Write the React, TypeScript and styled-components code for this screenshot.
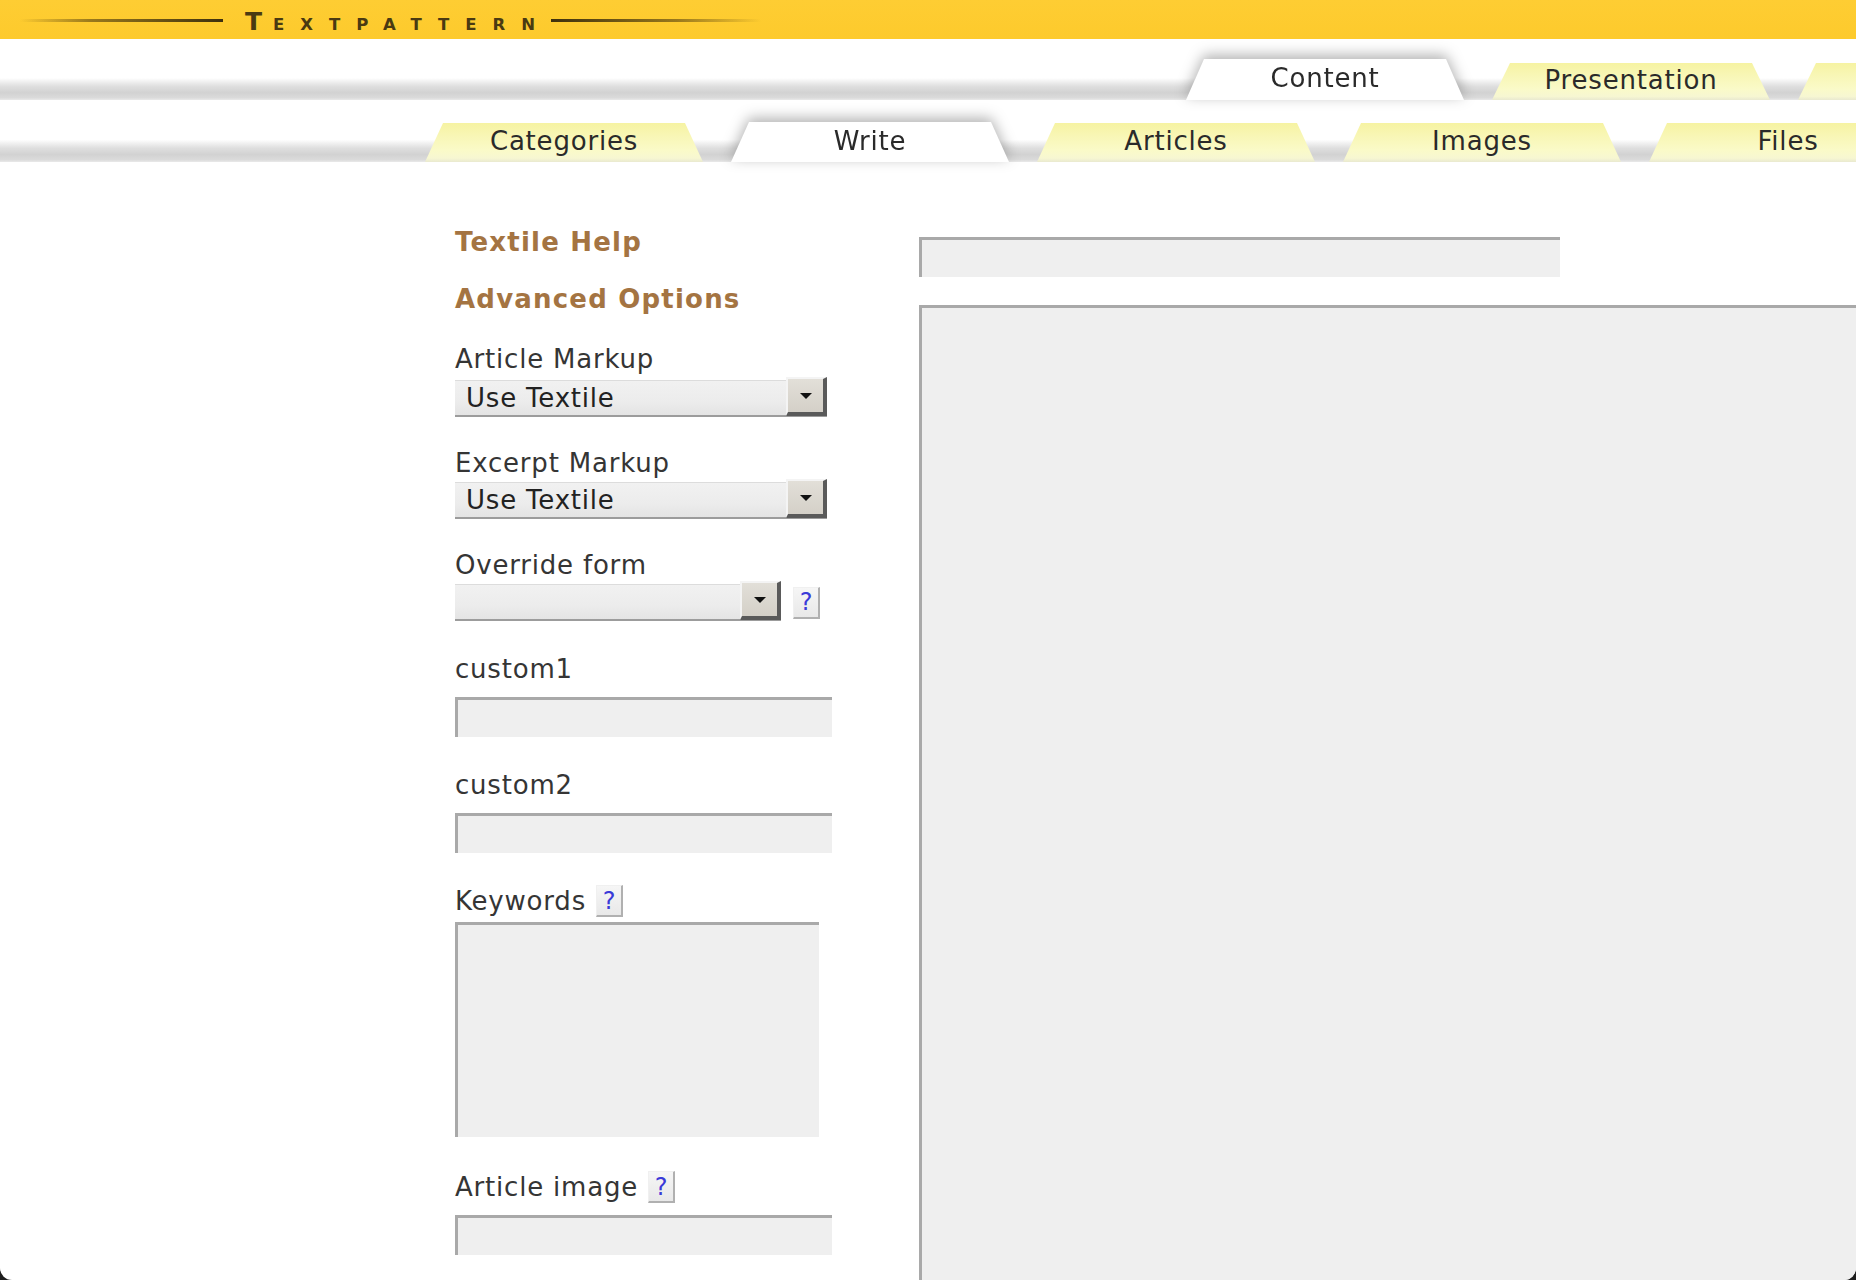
import React from "react";
import styled, { createGlobalStyle, css } from "styled-components";

const Global = createGlobalStyle`
  html, body {
    margin: 0;
    padding: 0;
    background: #1e1e1e;
    overflow: hidden;
  }
  #root {
    width: 1856px;
    height: 1280px;
  }
`;

const Page = styled.div`
  width: 1856px;
  height: 1280px;
  background: #ffffff;
  overflow: hidden;
  border-radius: 0 0 12px 12px;
  font-family: "DejaVu Sans", Verdana, sans-serif;
  color: #333;
`;

/* ---------- top yellow bar ---------- */
const LogoBar = styled.header`
  height: 39px;
  background: linear-gradient(180deg, #fecd33 0%, #fdca2c 100%);
  display: flex;
  align-items: center;
  padding-left: 20px;
  box-sizing: border-box;
`;

const LogoLine = styled.div<{ $dir: "left" | "right" }>`
  width: ${(p) => (p.$dir === "left" ? 203 : 210)}px;
  height: 3px;
  margin-top: 1px;
  background: ${(p) =>
    p.$dir === "left"
      ? "linear-gradient(90deg, rgba(70,50,10,0) 0%, rgba(70,52,12,0.55) 35%, #3e300d 100%)"
      : "linear-gradient(90deg, #3e300d 0%, rgba(70,52,12,0.55) 60%, rgba(70,50,10,0) 100%)"};
`;

const LogoText = styled.div`
  margin-left: 22px;
  display: flex;
  align-items: baseline;
  font-family: "DejaVu Sans", sans-serif;
  font-weight: bold;
  color: #4a3a12;
  text-transform: uppercase;
  line-height: 1;
  padding-top: 3px;
`;

const LogoBig = styled.span`
  font-size: 25px;
  letter-spacing: 11px;
`;

const LogoSmall = styled.span`
  font-size: 16.5px;
  letter-spacing: 16px;
`;

/* ---------- tab rows ---------- */
const TabRow = styled.nav<{ $height: number }>`
  height: ${(p) => p.$height}px;
  display: flex;
  align-items: flex-end;
  background: linear-gradient(
    180deg,
    #ffffff 0%,
    #ffffff 64%,
    #f0f0f0 70%,
    #dedede 78%,
    #d2d2d2 88%,
    #dadada 96%,
    #e9e9e9 100%
  );
`;

const RowFiller = styled.div<{ $width: number }>`
  flex: 0 0 ${(p) => p.$width}px;
`;

const TabSlot = styled.div<{ $active?: boolean }>`
  flex: 0 0 278px;
  margin: 0 14px;
  ${(p) =>
    p.$active &&
    css`
      filter: drop-shadow(0 -4px 7px rgba(0, 0, 0, 0.3));
    `}
`;

const TabShape = styled.div<{ $active?: boolean; $h: number }>`
  height: ${(p) => p.$h}px;
  clip-path: polygon(18px 0, calc(100% - 18px) 0, 100% 100%, 0 100%);
  background: ${(p) =>
    p.$active
      ? "#ffffff"
      : "linear-gradient(180deg, #f6f3a2 0%, #f8f6b4 30%, #fafac8 70%, #f7f7d2 90%, #e9e9d0 100%)"};
  display: flex;
  align-items: center;
  justify-content: center;
  box-sizing: border-box;
  padding-bottom: 3px;
  font-size: 26px;
  letter-spacing: 0.8px;
  color: #2a2a2a;
  white-space: nowrap;
`;

type TabDef = { key: string; label: string; active?: boolean };

const Tabs: React.FC<{ filler: number; height: number; tabs: TabDef[]; tabH: number; activeH: number }> = ({
  filler,
  height,
  tabs,
  tabH,
  activeH,
}) => (
  <TabRow $height={height}>
    <RowFiller $width={filler} />
    {tabs.map((t) => (
      <TabSlot key={t.key} $active={t.active}>
        <TabShape $active={t.active} $h={t.active ? activeH : tabH}>
          {t.label}
        </TabShape>
      </TabSlot>
    ))}
  </TabRow>
);

/* ---------- main area ---------- */
const Main = styled.main`
  display: flex;
  padding: 64px 0 0 455px;
`;

const LeftCol = styled.section`
  flex: 0 0 464px;
  display: flex;
  flex-direction: column;
`;

const RightCol = styled.section`
  flex: 1;
  display: flex;
  flex-direction: column;
  gap: 28px;
  padding-top: 11px;
  min-width: 0;
`;

const ToggleLink = styled.a<{ $after: number }>`
  display: block;
  font-weight: bold;
  font-size: 26px;
  letter-spacing: 1.2px;
  line-height: 32px;
  color: #a47442;
  text-decoration: none;
  margin-bottom: ${(p) => p.$after}px;
`;

const Field = styled.div<{ $after?: number }>`
  display: flex;
  flex-direction: column;
  margin-bottom: ${(p) => p.$after ?? 32}px;
`;

const LabelRow = styled.div<{ $gap: number }>`
  display: flex;
  align-items: center;
  gap: 10px;
  margin-bottom: ${(p) => p.$gap}px;
`;

const Label = styled.label`
  font-size: 26px;
  letter-spacing: 0.8px;
  line-height: 32px;
  color: #353535;
`;

const SelectRow = styled.div`
  display: flex;
  align-items: center;
  gap: 12px;
`;

const SelectBox = styled.div<{ $width: number }>`
  width: ${(p) => p.$width}px;
  height: 37px;
  box-sizing: border-box;
  display: flex;
  align-items: center;
  background: linear-gradient(180deg, #f1f1f1 0%, #ececec 60%, #e4e4e4 100%);
  border-top: 1px solid #dcdcdc;
  border-bottom: 2px solid #9c9c9c;
  padding-left: 11px;
`;

const SelectValue = styled.span`
  flex: 1;
  font-size: 26px;
  letter-spacing: 0.8px;
  color: #222;
  white-space: nowrap;
`;

const SelectButton = styled.span`
  flex: 0 0 41px;
  height: calc(100% + 5px);
  margin-top: -4px;
  box-sizing: border-box;
  background: linear-gradient(180deg, #e2dfd8 0%, #d4d0c8 100%);
  border-top: 2px solid #f4f4f4;
  border-left: 2px solid #f4f4f4;
  border-right: 4px solid #5a5a5a;
  border-bottom: 4px solid #5a5a5a;
  display: flex;
  align-items: center;
  justify-content: center;
`;

const Arrow = styled.span`
  width: 0;
  height: 0;
  border-left: 6px solid transparent;
  border-right: 6px solid transparent;
  border-top: 6px solid #111;
  margin-top: 2px;
`;

const HelpButton = styled.a`
  width: 27px;
  height: 32px;
  box-sizing: border-box;
  display: inline-flex;
  align-items: center;
  justify-content: center;
  background: linear-gradient(180deg, #f6f6f6 0%, #e8e8e8 100%);
  border-right: 2px solid #b0b0b0;
  border-bottom: 2px solid #b0b0b0;
  border-top: 1px solid #f0f0f0;
  border-left: 1px solid #f0f0f0;
  color: #3a3ad8;
  font-size: 24px;
  line-height: 1;
  text-decoration: none;
`;

const inputBase = css`
  box-sizing: border-box;
  display: block;
  background: #efefef;
  border: none;
  border-top: 3px solid #a9a9a9;
  border-left: 3px solid #a9a9a9;
  outline: none;
  margin: 0;
  padding: 4px 8px;
  font-family: "DejaVu Sans", sans-serif;
  font-size: 24px;
  color: #222;
  resize: none;
  flex-shrink: 0;
`;

const TextInput = styled.input<{ $width: number }>`
  ${inputBase};
  width: ${(p) => p.$width}px;
  height: 40px;
`;

const TextArea = styled.textarea<{ $width: number; $height: number }>`
  ${inputBase};
  width: ${(p) => p.$width}px;
  height: ${(p) => p.$height}px;
`;

const SelectField: React.FC<{
  label: string;
  value?: string;
  width: number;
  help?: boolean;
  gap: number;
  after: number;
}> = ({ label, value, width, help, gap, after }) => (
  <Field $after={after}>
    <LabelRow $gap={gap}>
      <Label>{label}</Label>
    </LabelRow>
    <SelectRow>
      <SelectBox $width={width}>
        <SelectValue>{value ?? "\u00a0"}</SelectValue>
        <SelectButton>
          <Arrow />
        </SelectButton>
      </SelectBox>
      {help && <HelpButton href="#">?</HelpButton>}
    </SelectRow>
  </Field>
);

export default function App() {
  return (
    <>
      <Global />
      <Page>
        <LogoBar>
          <LogoLine $dir="left" />
          <LogoText>
            <LogoBig>T</LogoBig>
            <LogoSmall>extpattern</LogoSmall>
          </LogoText>
          <LogoLine $dir="right" />
        </LogoBar>

        <Tabs
          filler={1172}
          height={61}
          tabH={37}
          activeH={41}
          tabs={[
            { key: "content", label: "Content", active: true },
            { key: "presentation", label: "Presentation" },
            { key: "admin", label: "" },
          ]}
        />
        <Tabs
          filler={411}
          height={62}
          tabH={39}
          activeH={40}
          tabs={[
            { key: "categories", label: "Categories" },
            { key: "write", label: "Write", active: true },
            { key: "articles", label: "Articles" },
            { key: "images", label: "Images" },
            { key: "files", label: "Files" },
          ]}
        />

        <Main>
          <LeftCol>
            <ToggleLink href="#" $after={25}>
              Textile Help
            </ToggleLink>
            <ToggleLink href="#" $after={28}>
              Advanced Options
            </ToggleLink>

            <SelectField label="Article Markup" value="Use Textile" width={372} gap={5} after={30} />
            <SelectField label="Excerpt Markup" value="Use Textile" width={372} gap={3} after={30} />
            <SelectField label="Override form" width={326} help gap={3} after={32} />

            <Field>
              <LabelRow $gap={12}>
                <Label>custom1</Label>
              </LabelRow>
              <TextInput $width={377} />
            </Field>

            <Field>
              <LabelRow $gap={12}>
                <Label>custom2</Label>
              </LabelRow>
              <TextInput $width={377} />
            </Field>

            <Field $after={34}>
              <LabelRow $gap={5}>
                <Label>Keywords</Label>
                <HelpButton href="#">?</HelpButton>
              </LabelRow>
              <TextArea $width={364} $height={215} />
            </Field>

            <Field>
              <LabelRow $gap={12}>
                <Label>Article image</Label>
                <HelpButton href="#">?</HelpButton>
              </LabelRow>
              <TextInput $width={377} />
            </Field>
          </LeftCol>

          <RightCol>
            <TextInput $width={641} />
            <TextArea $width={1000} $height={1000} />
          </RightCol>
        </Main>
      </Page>
    </>
  );
}
